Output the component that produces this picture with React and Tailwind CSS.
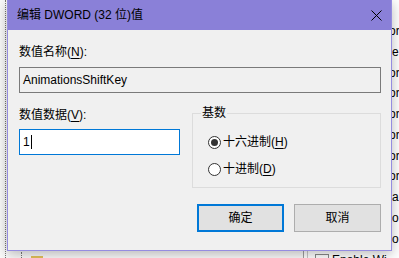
import React from "react";

const font = "font-[family-name:'Liberation_Sans','Noto_Sans_CJK_SC',sans-serif]";

function Mnemonic({ text, keyChar, after = "" }) {
  return (
    <span>
      {text}(<span className="underline underline-offset-2">{keyChar}</span>){after}
    </span>
  );
}

function Radio({ checked, children }) {
  return (
    <div className="flex items-center h-[14px] gap-[2px]">
      <span className="w-[13px] h-[13px] rounded-full border border-[#333] bg-white flex items-center justify-center">
        {checked && <span className="w-[7px] h-[7px] rounded-full bg-[#333]" />}
      </span>
      <span className="leading-[14px]">{children}</span>
    </div>
  );
}

function BinIcon() {
  return (
    <svg width="14" height="12" viewBox="0 0 14 12" className="shrink-0">
      <rect x="0.5" y="0.5" width="13" height="11" fill="#fff" stroke="#8a8a8a" />
      <text x="2" y="9" fontSize="7" fill="#1c5fc9" fontWeight="bold" fontFamily="Liberation Sans">011</text>
    </svg>
  );
}

export default function App() {
  let tails = ["or", "e", "or", "or", "or", "or", "or", "or", "al", "o", "o"];
  return (
    <div className={`relative w-[399px] h-[258px] overflow-hidden bg-white text-[12px] text-black ${font}`}>
      {/* registry editor behind the dialog */}
      <div className="flex h-full">
        <div className="w-[303px] shrink-0 h-full flex bg-[#fafafa]">
          <div className="w-[5px]" />
          <div className="h-full border-l border-dotted border-[#777]" />
          <div className="flex-1 flex flex-col justify-end">
            <div className="h-[2px] flex">
              <div className="ml-[41px] w-[13px] h-[2px] bg-[#d9b24a]" />
            </div>
            <div className="h-[6px] mt-[1px] flex items-end">
              <div className="ml-[15px] h-[6px] border-l border-dotted border-[#777]" />
              <div className="ml-[9px] w-[12px] h-[2px] bg-[#e3c25a]" />
            </div>
          </div>
        </div>
        <div className="w-[4px] shrink-0 h-full border-l border-[#a0a0a0]" />
        <div className="w-px shrink-0 h-full bg-[#c8c8c8]" />
        <div className="flex-1 min-w-0 overflow-hidden pt-[21px]">
          {tails.map((t, i) => (
            <div
              key={i}
              className={`h-[20.75px] leading-[20.75px] whitespace-nowrap ${t === "or" ? "pl-[81px]" : "pl-[84px]"}`}
            >
              {t}
            </div>
          ))}
          <div className="h-[20.75px] flex items-center whitespace-nowrap pl-[7px] gap-[3px]">
            <BinIcon />
            <span>Enable Wi</span>
          </div>
        </div>
      </div>

      {/* edit dialog */}
      <div className="absolute left-[7px] top-0 w-[385px] h-[251px] flex flex-col bg-[#f0f0f0] border border-t-0 border-[#958ce0] shadow-[0_3px_12px_rgba(0,0,0,0.28)]">
        <div className="h-[30px] shrink-0 flex items-center justify-between bg-[#8a80d8] pl-[9px] pr-[9px]">
          <span>编辑 DWORD (32 位)值</span>
          <svg width="11" height="11" viewBox="0 0 11 11">
            <path d="M0.5 0.5L10.5 10.5M10.5 0.5L0.5 10.5" stroke="#000" strokeWidth="1" />
          </svg>
        </div>
        <div className="flex flex-col pl-[11px] pr-[10px]">
          <div className="mt-[14px] h-[16px] leading-[16px]">
            <Mnemonic text="数值名称" keyChar="N" after=":" />
          </div>
          <div className="mt-[7px] h-[26px] flex items-center px-[3px] border border-[#7a7a7a] bg-[#f0f0f0]">
            AnimationsShiftKey
          </div>
          <div className="mt-[14px] flex items-start gap-[12px]">
            <div className="w-[161px] flex flex-col">
              <div className="h-[16px] leading-[16px]">
                <Mnemonic text="数值数据" keyChar="V" after=":" />
              </div>
              <div className="mt-[6px] h-[26px] flex items-center px-[3px] border border-[#0078d7] bg-white">
                <span>1</span>
                <span className="ml-[1px] w-px h-[14px] bg-black" />
              </div>
            </div>
            <div className="relative mt-[6px] w-[189px] h-[75px] border border-[#dcdcdc] pl-[15px] pt-[21px]">
              <span className="absolute left-[8px] top-[-9px] px-[1px] leading-[16px] bg-[#f0f0f0]">基数</span>
              <Radio checked>
                <Mnemonic text="十六进制" keyChar="H" />
              </Radio>
              <div className="mt-[13px]">
                <Radio>
                  <Mnemonic text="十进制" keyChar="D" />
                </Radio>
              </div>
            </div>
          </div>
          <div className="mt-[16px] flex justify-end gap-[10px]">
            <button className="w-[87px] h-[28px] border-2 border-[#0078d7] bg-[#e1e1e1]">确定</button>
            <button className="w-[87px] h-[28px] border border-[#adadad] bg-[#e1e1e1]">取消</button>
          </div>
        </div>
      </div>
    </div>
  );
}
